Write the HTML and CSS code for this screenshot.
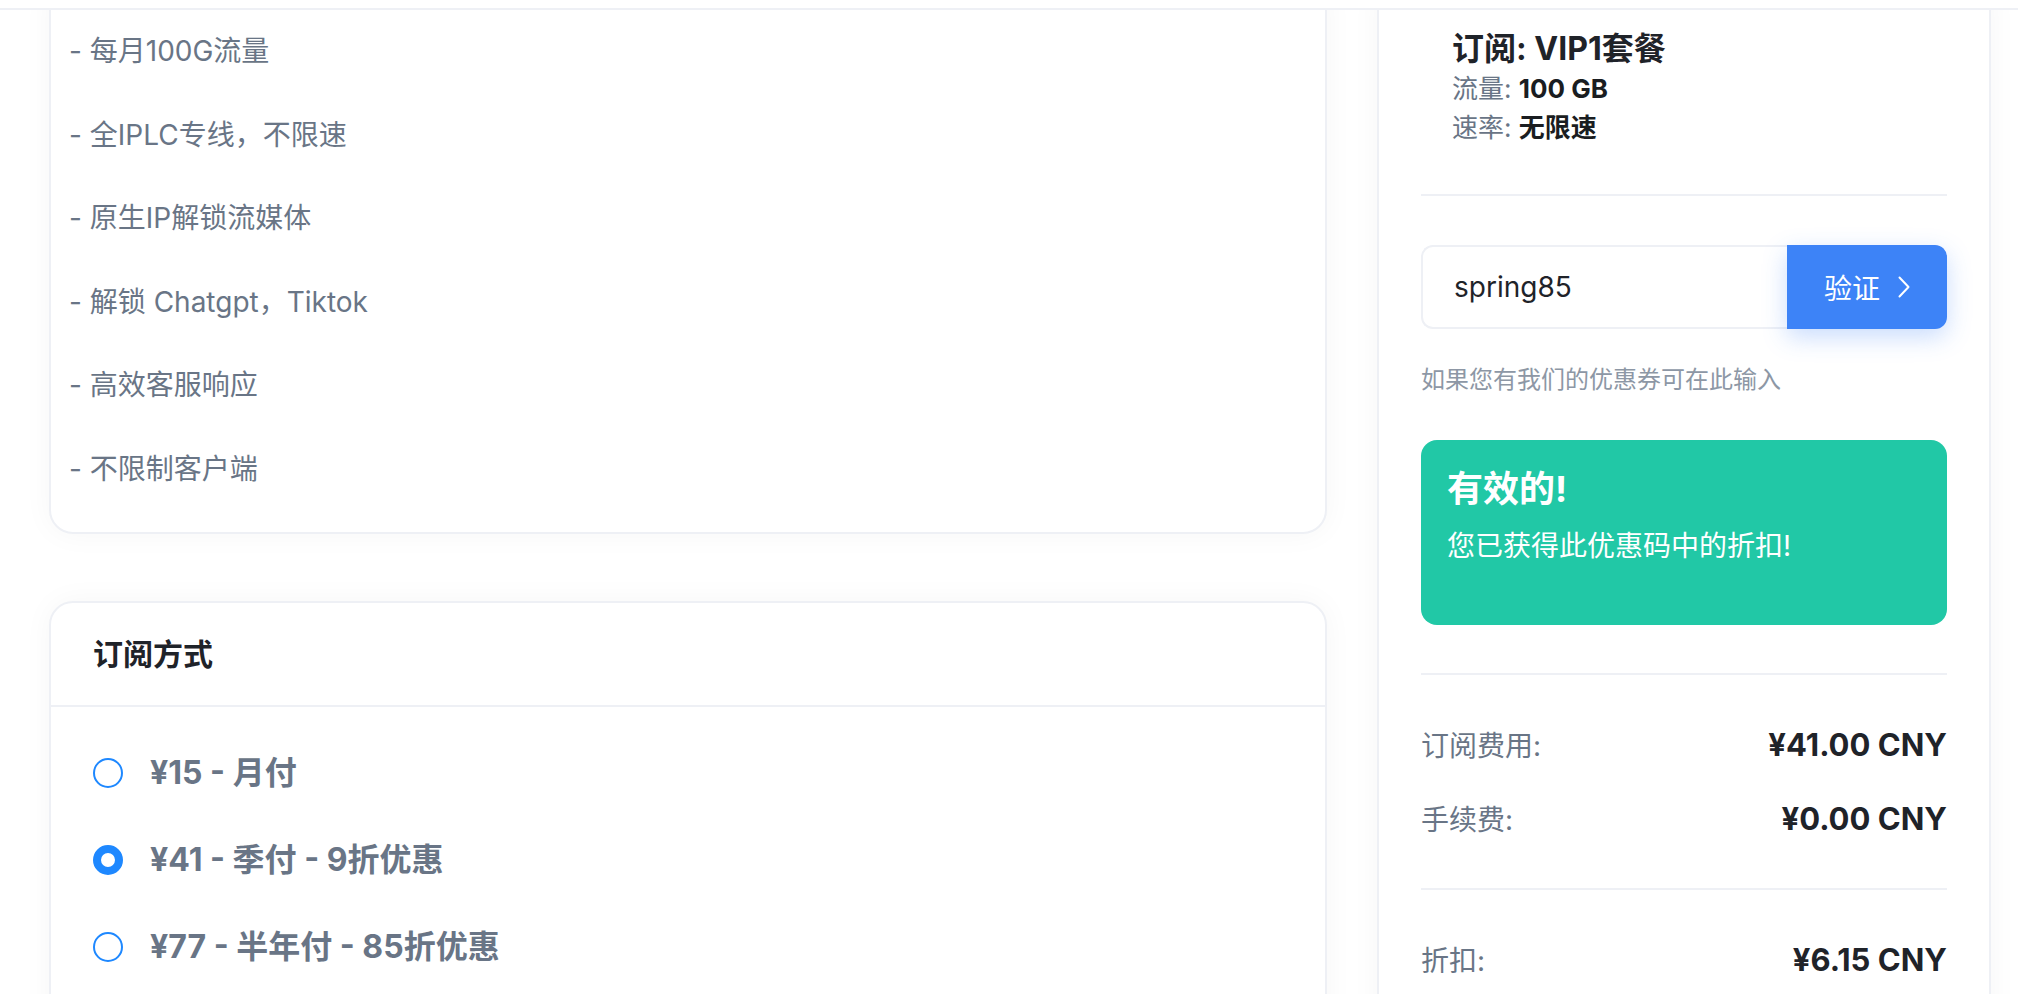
FILE: index.html
```html
<!DOCTYPE html>
<html lang="zh-CN">
<head>
  <meta charset="UTF-8">
  <title>订阅 - VIP1套餐</title>
  <link rel="stylesheet" href="styles.css">
</head>
<body>
  <div class="topbar"></div>

  <div class="checkout">
    <!-- Left column: plan description + billing cycle -->
    <div class="main-col">
      <div class="card plan-desc">
        <p>- 每月100G流量</p>
        <p>- 全IPLC专线，不限速</p>
        <p>- 原生IP解锁流媒体</p>
        <p>- 解锁 Chatgpt，Tiktok</p>
        <p>- 高效客服响应</p>
        <p>- 不限制客户端</p>
      </div>

      <div class="card cycle-card">
        <div class="card-header">订阅方式</div>
        <div class="cycle-list">
          <label class="cycle-option">
            <span class="radio"></span>
            <span class="cycle-text">¥15 - 月付</span>
          </label>
          <label class="cycle-option">
            <span class="radio checked"></span>
            <span class="cycle-text">¥41 - 季付 - 9折优惠</span>
          </label>
          <label class="cycle-option">
            <span class="radio"></span>
            <span class="cycle-text">¥77 - 半年付 - 85折优惠</span>
          </label>
        </div>
      </div>
    </div>

    <!-- Right column: order summary -->
    <div class="card summary">
      <div class="plan-info">
        <div class="plan-title">订阅: VIP1套餐</div>
        <div class="plan-meta">流量: <b>100 GB</b></div>
        <div class="plan-meta">速率: <b>无限速</b></div>
      </div>

      <div class="divider first"></div>

      <div class="coupon-group">
        <input type="text" class="coupon-input" value="spring85">
        <button class="coupon-btn">
          验证
          <svg width="12" height="22" viewBox="0 0 12 22"><polyline points="1.5,1.5 10.5,11 1.5,20.5" fill="none" stroke="#fff" stroke-width="2" stroke-linecap="round" stroke-linejoin="round"/></svg>
        </button>
      </div>
      <p class="coupon-note">如果您有我们的优惠券可在此输入</p>

      <div class="alert-success">
        <div class="alert-title">有效的!</div>
        <div class="alert-body">您已获得此优惠码中的折扣!</div>
      </div>

      <div class="divider"></div>

      <div class="price-row first">
        <span class="price-label">订阅费用:</span>
        <span class="price-value">¥41.00 CNY</span>
      </div>
      <div class="price-row">
        <span class="price-label">手续费:</span>
        <span class="price-value">¥0.00 CNY</span>
      </div>

      <div class="divider"></div>

      <div class="price-row first">
        <span class="price-label">折扣:</span>
        <span class="price-value">¥6.15 CNY</span>
      </div>
    </div>
  </div>
</body>
</html>
```

FILE: styles.css
```css
body {
  margin: 0;
  background-color: #fff;
  font-family: "Inter", "Noto Sans CJK SC", sans-serif;
  color: #1f2329;
  overflow: hidden;
}
.topbar {
  position: fixed;
  top: 0;
  left: 0;
  right: 0;
  height: 8px;
  background-color: #fff;
  border-bottom: 2px solid #eef0f5;
  z-index: 10;
}
.checkout {
  display: grid;
  grid-template-columns: 1278px 614px;
  column-gap: 50px;
  align-items: start;
  padding-left: 49px;
  margin-top: -20px;
}
.card {
  background-color: #fff;
  border: 2px solid #eef0f5;
  border-radius: 24px;
  box-shadow: 0 0 30px rgba(20, 30, 60, 0.04);
}
.plan-desc {
  display: flex;
  flex-direction: column;
  gap: 41.5px;
  padding: 48px 18px 42px;
}
.plan-desc p {
  margin: 0;
  font-size: 28px;
  line-height: 42px;
  color: #697586;
}
.cycle-card {
  margin-top: 67px;
}
.card-header {
  padding: 29px 42px;
  font-size: 30px;
  font-weight: 700;
  line-height: 44px;
  color: #1f2329;
  border-bottom: 2px solid #eef0f5;
}
.cycle-list {
  display: flex;
  flex-direction: column;
  gap: 39px;
  padding: 42px 42px 60px;
}
.cycle-option {
  display: flex;
  align-items: center;
  gap: 27px;
  height: 48px;
}
.radio {
  width: 30px;
  height: 30px;
  box-sizing: border-box;
  border: 2px solid #1e88ff;
  border-radius: 50%;
  background-color: #fff;
  flex-shrink: 0;
}
.radio.checked {
  border-width: 8px;
}
.cycle-text {
  font-size: 32px;
  font-weight: 700;
  line-height: 48px;
  color: #697586;
}
.summary {
  padding: 47px 42px 60px;
}
.plan-info {
  padding-left: 31px;
}
.plan-title {
  font-size: 32px;
  font-weight: 700;
  line-height: 40px;
  color: #1f2329;
}
.plan-meta {
  font-size: 26px;
  line-height: 39px;
  color: #697586;
}
.plan-meta b {
  color: #1a1d21;
}
.divider {
  height: 2px;
  background-color: #eef0f5;
  margin-top: 48px;
}
.divider.first {
  margin-top: 47px;
}
.coupon-group {
  display: flex;
  height: 84px;
  margin-top: 49px;
}
.coupon-input {
  flex: 1;
  min-width: 0;
  box-sizing: border-box;
  border: 2px solid #eef0f5;
  border-right: none;
  border-radius: 12px 0 0 12px;
  padding: 0 31px;
  font-family: "Inter", "Noto Sans CJK SC", sans-serif;
  font-size: 28px;
  color: #1f2329;
  outline: none;
}
.coupon-btn {
  width: 160px;
  border: none;
  border-radius: 0 12px 12px 0;
  background-color: #3d83f7;
  color: #fff;
  font-family: "Inter", "Noto Sans CJK SC", sans-serif;
  font-size: 28px;
  display: flex;
  align-items: center;
  justify-content: center;
  gap: 18px;
  box-shadow: 0 8px 24px rgba(61, 131, 247, 0.28);
  cursor: pointer;
}
.coupon-note {
  margin: 33px 0 0;
  font-size: 24px;
  line-height: 36px;
  color: #8d97a5;
}
.alert-success {
  margin-top: 42px;
  padding: 27px 26px 61px;
  border-radius: 16px;
  background-color: #21c8a6;
  color: #fff;
}
.alert-title {
  font-size: 36px;
  font-weight: 700;
  line-height: 44px;
}
.alert-body {
  margin-top: 17px;
  font-size: 28px;
  line-height: 36px;
}
.price-row {
  display: flex;
  justify-content: space-between;
  align-items: center;
  height: 44px;
  margin-top: 30px;
}
.price-row.first {
  margin-top: 47px;
}
.price-label {
  font-size: 28px;
  color: #697586;
}
.price-value {
  font-size: 31px;
  font-weight: 700;
  color: #1f2329;
}
```
